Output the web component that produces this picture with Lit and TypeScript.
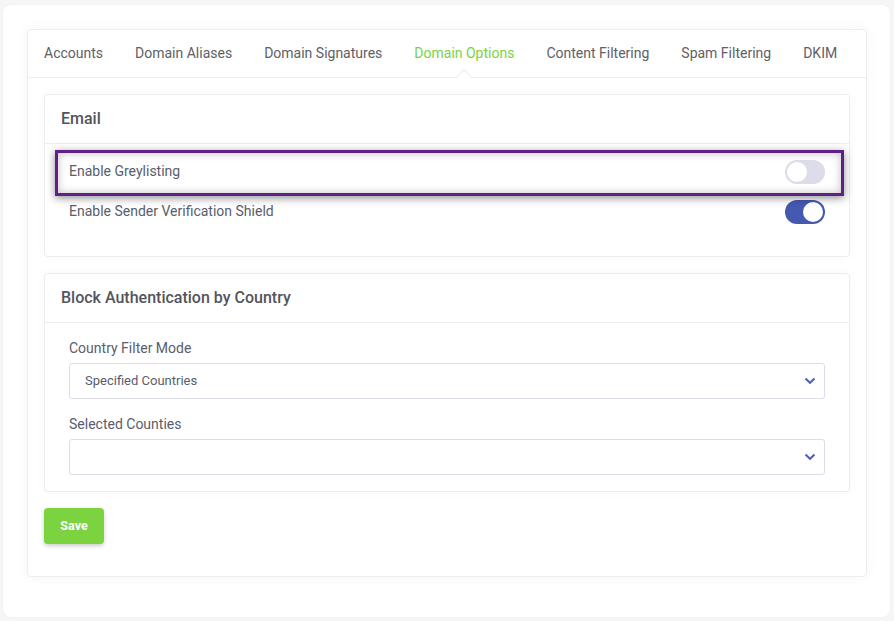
import { LitElement, html, css } from "lit";
import { customElement } from "lit/decorators.js";

const tabs = ["Accounts", "Domain Aliases", "Domain Signatures", "Domain Options", "Content Filtering", "Spam Filtering", "DKIM"];

@customElement("app-root")
export class AppRoot extends LitElement {
  static styles = css`
    :host { display: block; width: 894px; height: 621px; background: #f6f6f7; font-family: Roboto, "Liberation Sans", sans-serif; color: #595d6e; overflow: hidden; }
    * { box-sizing: border-box; }
    .panel { margin: 5px 0 0 3px; width: 887px; height: 612px; background: #fff; border-radius: 8px; padding: 24px; box-shadow: 0 0 3px rgba(82,63,105,.05); }
    .card { width: 840px; height: 548px; background: #fff; border: 1px solid #ebedf2; border-radius: 4px; box-shadow: 0 0 13px rgba(82,63,105,.05); }
    .tabs { display: flex; height: 48px; padding-left: 16px; gap: 32px; border-bottom: 1px solid #ebedf2; align-items: flex-start; }
    .tab { position: relative; font-size: 14px; line-height: 46px; height: 47px; white-space: nowrap; color: #606066; }
    .tab.active { color: #7ad33f; }
    .tab.active::after { content: ""; position: absolute; left: 50%; bottom: -4px; width: 9px; height: 9px; margin-left: -5px; background: #fff; border-left: 1px solid #ebedf2; border-top: 1px solid #ebedf2; transform: rotate(45deg); }
    .content { padding: 16px 16px 0; display: flex; flex-direction: column; gap: 16px; }
    .section { background: #fff; border: 1px solid #ebedf2; border-radius: 4px; box-shadow: 0 0 13px rgba(82,63,105,.03); }
    .head { height: 49px; padding: 0 16px 2px; display: flex; align-items: center; font-size: 16px; font-weight: 500; color: #54545c; border-bottom: 1px solid #ebedf2; }
    .email-body { height: 112px; padding: 8px 24px 0; position: relative; }
    .row { height: 40px; display: flex; align-items: center; justify-content: space-between; font-size: 14px; padding-bottom: 2px; }
    .toggle { width: 40px; height: 24px; border-radius: 12px; position: relative; margin-top: 2px; }
    .toggle.off { background: #dcdcea; }
    .toggle.on { background: #4659b1; }
    .knob { position: absolute; top: 2px; width: 20px; height: 20px; border-radius: 50%; background: #fff; }
    .off .knob { left: 2px; }
    .on .knob { right: 2px; }
    .highlight { position: absolute; left: 10px; top: 6px; width: 789px; height: 46px; border: 3px solid #5f2189; box-shadow: 0 2px 8px rgba(0,0,0,.45), inset 0 0 8px rgba(0,0,0,.25); pointer-events: none; }
    .form-body { height: 168px; padding: 15px 24px 0; display: flex; flex-direction: column; gap: 15px; }
    .field { display: flex; flex-direction: column; gap: 5px; }
    label { font-size: 14px; line-height: 20px; height: 20px; }
    .select { height: 36px; border: 1px solid #dcdcea; border-radius: 3px; padding: 0 15px 2px; display: flex; align-items: center; justify-content: space-between; font-size: 13px; color: #595d6e; }
    .select svg { margin-right: -7px; margin-top: 2px; }
    .save { align-self: flex-start; width: 60px; height: 36px; margin-top: 0; padding: 0 0 2px; border: none; border-radius: 4px; background: #7ad33f; color: #fff; font: 700 12.5px Roboto, "Liberation Sans", sans-serif; box-shadow: 0 2px 4px rgba(0,0,0,.2); }
  `;

  chevron() {
    return html`<svg width="12" height="8" viewBox="0 0 12 8"><path d="M1.5 1.5 6 5.8 10.5 1.5" fill="none" stroke="#5060bb" stroke-width="2"/></svg>`;
  }

  render() {
    return html`
      <div class="panel">
        <div class="card">
          <div class="tabs">
            ${tabs.map((t) => html`<div class="tab ${t === "Domain Options" ? "active" : ""}">${t}</div>`)}
          </div>
          <div class="content">
            <div class="section">
              <div class="head">Email</div>
              <div class="email-body">
                <div class="row"><span>Enable Greylisting</span><div class="toggle off"><div class="knob"></div></div></div>
                <div class="row"><span>Enable Sender Verification Shield</span><div class="toggle on"><div class="knob"></div></div></div>
                <div class="highlight"></div>
              </div>
            </div>
            <div class="section">
              <div class="head">Block Authentication by Country</div>
              <div class="form-body">
                <div class="field"><label>Country Filter Mode</label><div class="select"><span>Specified Countries</span>${this.chevron()}</div></div>
                <div class="field"><label>Selected Counties</label><div class="select"><span></span>${this.chevron()}</div></div>
              </div>
            </div>
            <button class="save">Save</button>
          </div>
        </div>
      </div>
    `;
  }
}
